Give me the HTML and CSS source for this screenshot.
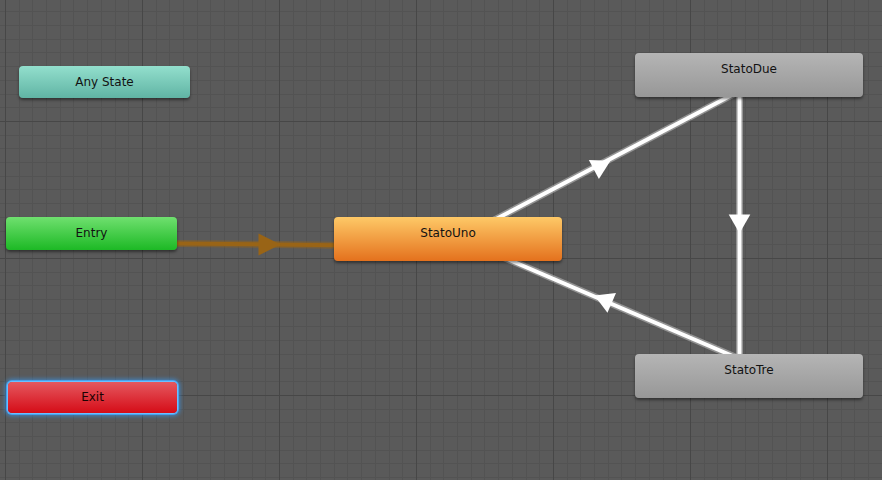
FILE: index.html
```html
<!DOCTYPE html>
<html lang="en">

<head>
    <meta charset="UTF-8">
    <meta name="viewport" content="width=device-width, initial-scale=1.0">
    <title>Animator</title>
    <link rel="stylesheet" href="styles.css">
</head>

<body>
    <div class="graph">
        <!-- Transitions -->
        <svg class="edges" width="882" height="480" viewBox="0 0 882 480">
            <defs>
                <polygon id="arrowHead" points="12.5,0 -6.25,10.8 -6.25,-10.8" />
            </defs>

            <!-- Entry -> StatoUno (default transition) -->
            <line class="edge-default-glow" x1="176" y1="243.4" x2="336" y2="245.2" />
            <line class="edge-default" x1="176" y1="243.4" x2="336" y2="245.2" />
            <polygon class="arrow-default" points="258.5,233.6 258.5,255.6 280.5,244.6" />

            <!-- StatoUno -> StatoDue -->
            <line class="edge-glow" x1="440" y1="248.6" x2="749" y2="86" />
            <line class="edge" x1="440" y1="248.6" x2="749" y2="86" />
            <use href="#arrowHead" class="arrow" transform="translate(599.4 166.6) rotate(-27.8)" />

            <!-- StatoDue -> StatoTre -->
            <line class="edge-glow" x1="739.5" y1="75" x2="739.5" y2="376" />
            <line class="edge" x1="739.5" y1="75" x2="739.5" y2="376" />
            <use href="#arrowHead" class="arrow" transform="translate(739.5 220.8) rotate(90)" />

            <!-- StatoTre -> StatoUno -->
            <line class="edge-glow" x1="749" y1="363" x2="448" y2="233.5" />
            <line class="edge" x1="749" y1="363" x2="448" y2="233.5" />
            <use href="#arrowHead" class="arrow" transform="translate(606 300.4) rotate(203.3)" />
        </svg>

        <!-- States -->
        <div class="node node-small node-any">Any State</div>
        <div class="node node-small node-entry">Entry</div>
        <div class="node node-small node-exit">Exit</div>

        <div class="node node-state node-default node-uno">StatoUno</div>
        <div class="node node-state node-due">StatoDue</div>
        <div class="node node-state node-tre">StatoTre</div>
    </div>
</body>
</html>
```

FILE: styles.css
```css
body {
    margin: 0;
    padding: 0;
    background: #5a5a5a;
    font-family: 'DejaVu Sans', 'Liberation Sans', sans-serif;
    overflow: hidden;
}

/* grid: minor every 13.7px, major every 137px */
.graph {
    position: relative;
    width: 882px;
    height: 480px;
    overflow: hidden;
    background-color: #5a5a5a;
    background-image:
        repeating-linear-gradient(180deg, transparent 0 121px, #474747 121px 122px, transparent 122px 137px),
        repeating-linear-gradient(90deg, transparent 0 5px, #474747 5px 6px, transparent 6px 137px),
        repeating-linear-gradient(180deg, transparent 0 11.4px, #535353 11.4px 12.4px, transparent 12.4px 13.7px),
        repeating-linear-gradient(90deg, transparent 0 5px, #535353 5px 6px, transparent 6px 13.7px);
}

.edges {
    position: absolute;
    left: 0;
    top: 0;
}

.edge {
    stroke: #ffffff;
    stroke-width: 4;
}

.edge-glow {
    stroke: rgba(255, 255, 255, 0.35);
    stroke-width: 7;
}

.arrow {
    fill: #ffffff;
}

.edge-default {
    stroke: #996416;
    stroke-width: 4;
}

.edge-default-glow {
    stroke: rgba(153, 100, 22, 0.45);
    stroke-width: 7;
}

.arrow-default {
    fill: #996416;
}

/* Nodes */
.node {
    position: absolute;
    box-sizing: border-box;
    border-radius: 4px;
    color: #121212;
    font-size: 12px;
    text-align: center;
    box-shadow: 0 2px 3px rgba(0, 0, 0, 0.45);
}

.node-small {
    width: 171px;
    height: 32px;
    line-height: 32px;
}

.node-state {
    width: 228px;
    height: 44px;
    padding-top: 8px;
    line-height: 16px;
}

.node-any {
    left: 19px;
    top: 66px;
    background: linear-gradient(#93dfcd, #60b4a4);
}

.node-entry {
    left: 6px;
    top: 217px;
    height: 33px;
    line-height: 33px;
    background: linear-gradient(#6fe06f, #1db925);
}

.node-exit {
    left: 8px;
    top: 382px;
    width: 169px;
    height: 31px;
    line-height: 31px;
    color: #1c0202;
    background: linear-gradient(#e5585f, #d50c17);
    box-shadow: 0 0 0 1px #6cc0ff, 0 0 0 2px rgba(70, 165, 245, 0.9), 0 0 4px 3px rgba(56, 150, 235, 0.7);
}

.node-uno {
    left: 334px;
    top: 217px;
    background: linear-gradient(#fec967, #e4711d);
}

.node-due {
    left: 635px;
    top: 53px;
    background: linear-gradient(#b5b5b5, #979797);
}

.node-tre {
    left: 635px;
    top: 354px;
    background: linear-gradient(#b5b5b5, #979797);
}
```
